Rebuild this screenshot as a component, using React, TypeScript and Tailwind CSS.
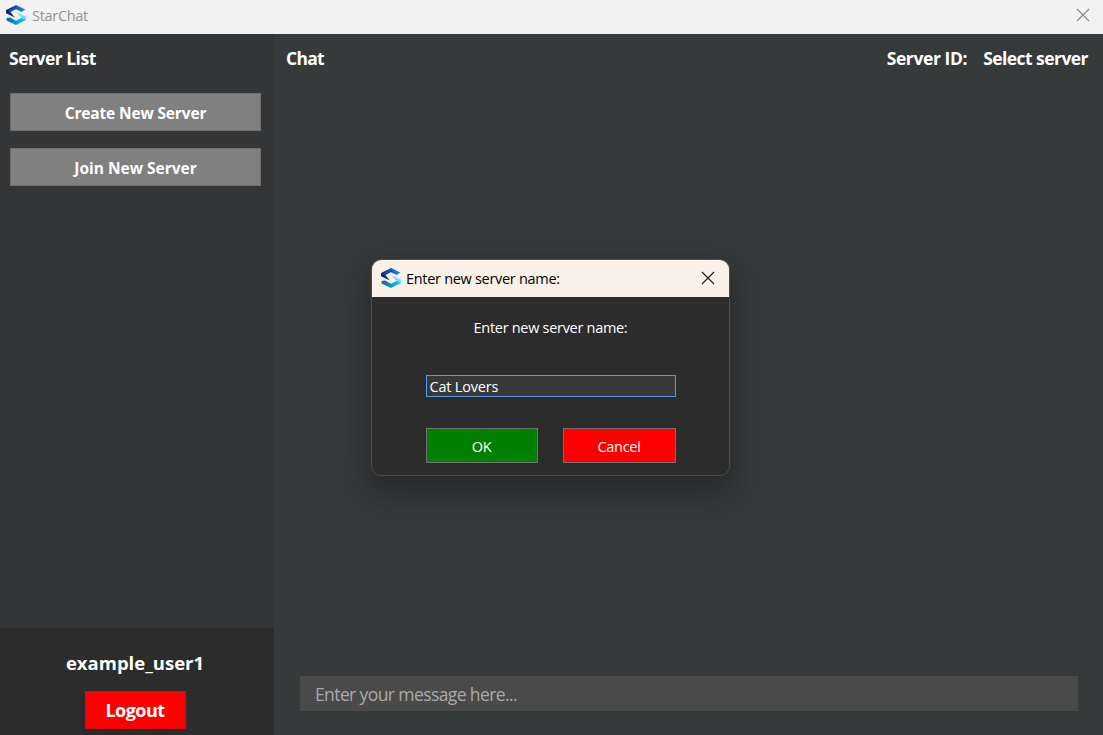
import React from "react";

function Logo({ id }: { id: string }) {
  return (
    <svg width="20" height="20" viewBox="0 0 20 20" className="shrink-0">
      <defs>
        <linearGradient id={`${id}-top`} x1="0" x2="1" y1="0" y2="0">
          <stop offset="0" stopColor="#0b3484" />
          <stop offset="0.5" stopColor="#1257b4" />
          <stop offset="1" stopColor="#2f8ff0" />
        </linearGradient>
        <linearGradient id={`${id}-bottom`} x1="0" x2="1" y1="0" y2="0">
          <stop offset="0" stopColor="#0a62a8" />
          <stop offset="0.5" stopColor="#0a9cd0" />
          <stop offset="1" stopColor="#20c8ec" />
        </linearGradient>
      </defs>
      <path d="M10 0 L19.4 4.6 L15.6 7 L10 4.2 L4.4 7 L0 8 V5 Z" fill={`url(#${id}-top)`} />
      <path d="M0 5 L4.4 7 L8.8 12.4 L0.6 8.6 L0 8 Z" fill="#0a2a6e" />
      <path d="M10 20 L0.6 15.4 V13 L4.2 12.6 L10 15.8 L15.6 13 L20 12 V15 Z" fill={`url(#${id}-bottom)`} />
      <path d="M20 15 L15.6 13 L10.8 7.6 L19.4 11.4 L20 12 Z" fill="#5ce6fa" />
    </svg>
  );
}

function CloseIcon({ className }: { className: string }) {
  return (
    <svg width="14" height="14" viewBox="0 0 14 14" fill="none" stroke="currentColor" className={className}>
      <path d="M1 1 L13 13 M13 1 L1 13" strokeWidth="1.2" />
    </svg>
  );
}

function NewServerDialog() {
  return (
    <div className="absolute top-[259px] left-[371px] flex h-[217px] w-[359px] flex-col overflow-hidden rounded-[10px] border border-[#4b4c4c] bg-[#2c2c2c] shadow-[0_14px_32px_6px_rgba(0,0,0,0.28)]">
      <header className="flex h-[37px] shrink-0 items-center bg-[#f9f1e8] pr-3.5 pb-px pl-[9px] text-black">
        <Logo id="dialog" />
        <span className="ml-[5px] flex-1 pt-0.5 text-[14.5px] tracking-[-0.3px]">Enter new server name:</span>
        <CloseIcon className="text-[#202020]" />
      </header>
      <div className="flex flex-col items-center px-[53px] pt-[21px] text-[14.5px] tracking-[-0.3px] text-white">
        <label className="leading-5">Enter new server name:</label>
        <div className="mt-[37px] flex h-[22px] w-[250px] items-center border border-[#569de5] bg-[#383838] pt-px pl-[3px] tracking-[-0.2px]">Cat Lovers</div>
        <div className="mt-[31px] flex w-[250px] justify-between">
          <button className="h-[35px] w-[112px] border border-[#707070] bg-[#008000] pt-[3px]">OK</button>
          <button className="h-[35px] w-[113px] border border-[#707070] bg-[#ff0000] pt-[3px]">Cancel</button>
        </div>
      </div>
    </div>
  );
}

export default function App() {
  return (
    <div className="relative flex h-[735px] w-[1103px] flex-col overflow-hidden bg-[#373a3b] font-['Open_Sans','Noto_Sans',sans-serif] whitespace-nowrap text-white">
      <header className="flex h-[34px] shrink-0 items-center bg-[#f2f2f2] pr-[13px] pb-1 pl-1.5 text-[#929292]">
        <Logo id="window" />
        <span className="ml-1.5 flex-1 pt-0.5 text-[14.5px] tracking-[-0.3px]">StarChat</span>
        <CloseIcon className="text-[#8c8c8c]" />
      </header>
      <div className="flex min-h-0 flex-1">
        <aside className="flex w-[274px] flex-col bg-[#343536]">
          <h2 className="mt-3 ml-[9px] h-6 text-[17.5px] leading-6 font-bold tracking-[-0.5px]">Server List</h2>
          <nav className="mt-[23px] ml-2.5 flex w-[251px] flex-1 flex-col gap-[17px]">
            <button className="h-[38px] border border-[#707070] bg-[#808080] pt-1 text-[15.5px] font-bold tracking-[-0.15px]">Create New Server</button>
            <button className="h-[38px] border border-[#707070] bg-[#808080] pt-1 text-[15.5px] font-bold">Join New Server</button>
          </nav>
          <footer className="flex h-[107px] flex-col items-center bg-[#2c2c2c] pt-[23px] pr-1">
            <span className="text-[18.5px] leading-6 font-bold">example_user1</span>
            <button className="mt-4 h-[38px] w-[101px] border border-[#e50505] bg-[#ff0000] pt-px text-[18px] font-bold tracking-[-0.55px]">Logout</button>
          </footer>
        </aside>
        <main className="flex flex-1 flex-col pr-[25px] pl-[26px]">
          <div className="-mr-2.5 -ml-3.5 mb-px flex pt-3 text-[17.5px] leading-6 font-bold tracking-[-0.55px]">
            <h1 className="flex-1 tracking-[-0.7px]">Chat</h1>
            <span className="tracking-[-0.4px]">Server ID:</span>
            <span className="ml-4">Select server</span>
          </div>
          <div className="flex-1" />
          <div className="mb-6 flex h-[35px] items-center bg-[#4a4a4a] pt-px pl-[15px] text-[17.5px] tracking-[-0.6px] text-[#a9a9a9]">Enter your message here...</div>
        </main>
      </div>
      <NewServerDialog />
    </div>
  );
}
